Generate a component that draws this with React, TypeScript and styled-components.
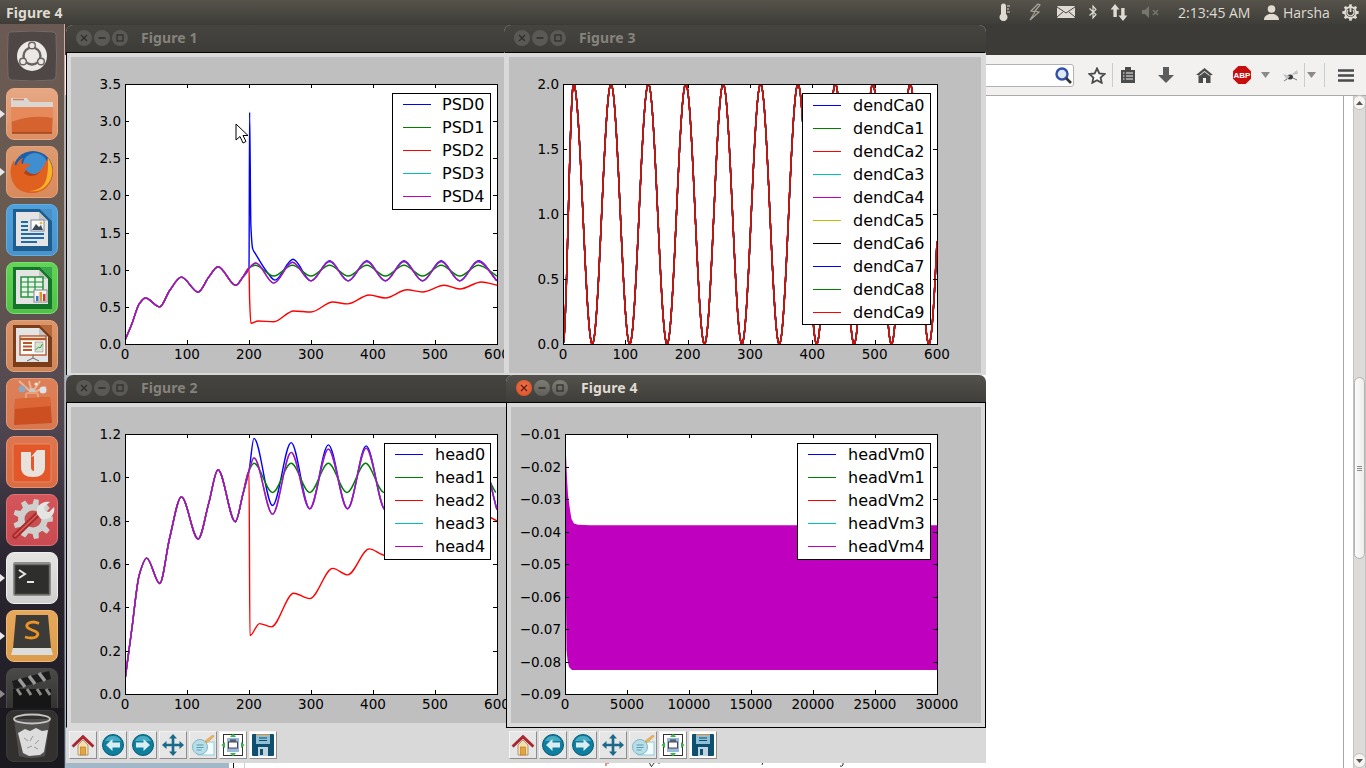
import React from "react";
import styled, { createGlobalStyle } from "styled-components";

const GlobalStyle = createGlobalStyle`
  html, body {
    margin: 0;
    padding: 0;
    background: #fff;
    font-family: "Open Sans", "Liberation Sans", sans-serif;
  }
`;

const Screen = styled.div`
  position: relative;
  width: 1366px;
  height: 768px;
  overflow: hidden;
  display: flex;
  flex-direction: column;
`;

/* ---------- top panel ---------- */
const Panel = styled.div`
  height: 24px;
  flex: none;
  display: flex;
  justify-content: space-between;
  align-items: center;
  background: linear-gradient(#56534b, #3e3d38);
  color: #dfdbd2;
`;

const PanelTitle = styled.div`
  padding-left: 6px;
  font-family: "Noto Sans", sans-serif;
  font-weight: 700;
  font-size: 14px;
  letter-spacing: 0.1px;
`;

const Tray = styled.div`
  display: flex;
  align-items: center;
  height: 24px;
`;

const Slot = styled.div<{ $w: number; $left?: number }>`
  width: ${(p) => p.$w}px;
  height: 24px;
  flex: none;
  box-sizing: border-box;
  display: flex;
  align-items: center;
  justify-content: ${(p) => (p.$left !== undefined ? "flex-start" : "center")};
  padding-left: ${(p) => p.$left ?? 0}px;
  font-size: 14px;
  white-space: nowrap;
`;

/* ---------- launcher ---------- */
const Body = styled.div`
  flex: 1;
  display: flex;
  min-height: 0;
`;

const Launcher = styled.div`
  width: 65px;
  flex: none;
  box-sizing: border-box;
  border-right: 1px solid;
  border-image: linear-gradient(#d8aa9c, #a89a94 50%, #4a4750) 1;
  background: linear-gradient(#6b5a53 0%, #675a50 30%, #4d4450 55%, #2a2530 72%, #1e1b22 100%);
  display: flex;
  flex-direction: column;
`;

const LauncherList = styled.div`
  height: 684px;
  overflow: hidden;
  flex: none;
  padding-top: 6px;
  box-sizing: border-box;
  display: flex;
  flex-direction: column;
  gap: 6px;
`;

const Tile = styled.div<{ $bg: string; $edge: string; $pip?: boolean; $dim?: boolean }>`
  position: relative;
  flex: none;
  width: 52px;
  height: 52px;
  margin-left: 6px;
  box-sizing: border-box;
  border-radius: 8px;
  border: 1px solid ${(p) => p.$edge};
  background: ${(p) => p.$bg};
  &::before {
    content: "";
    display: ${(p) => (p.$pip ? "block" : "none")};
    position: absolute;
    left: -7px;
    top: 21px;
    border-left: 5px solid ${(p) => (p.$dim ? "#8a8a8a" : "#e8e8e8")};
    border-top: 4px solid transparent;
    border-bottom: 4px solid transparent;
  }
  svg {
    display: block;
  }
`;

const TrashSlot = styled.div`
  flex: 1;
  padding-top: 2px;
  background: #1b1920;
`;

/* ---------- browser behind the figures ---------- */
const Browser = styled.div`
  flex: 1;
  display: flex;
  flex-direction: column;
  min-width: 0;
`;

const BrowserTitle = styled.div`
  height: 31px;
  flex: none;
  background: #3c3b37;
`;

const BrowserBar = styled.div`
  height: 41px;
  flex: none;
  box-sizing: border-box;
  background: #f2f1f0;
  border-bottom: 1px solid #a9a9a9;
  display: flex;
  align-items: center;
  justify-content: flex-end;
`;

const SearchBox = styled.div`
  width: 160px;
  height: 23px;
  box-sizing: border-box;
  background: #fff;
  border: 1px solid #b2b2b2;
  border-radius: 3px;
  display: flex;
  align-items: center;
  justify-content: flex-end;
`;

const BarSlot = styled.div<{ $w: number }>`
  width: ${(p) => p.$w}px;
  height: 24px;
  flex: none;
  display: flex;
  align-items: center;
  justify-content: center;
`;

const BarSep = styled.div`
  width: 1px;
  height: 24px;
  flex: none;
  background: #c9cdd0;
`;

const Page = styled.div`
  flex: 1;
  display: flex;
  background: #fff;
  min-height: 0;
  position: relative;
`;

const BlueColumn = styled.div`
  width: 164px;
  background: #a2b8c8;
  flex: none;
`;

const BlackRule = styled.div`
  width: 1px;
  margin-left: 4px;
  background: #111;
  flex: none;
`;

const LightRule = styled.div<{ $gap: number; $c: string }>`
  width: 1px;
  margin-left: ${(p) => p.$gap}px;
  background: ${(p) => p.$c};
  flex: none;
`;

const Scrollbar = styled.div`
  width: 13px;
  margin-left: 9px;
  flex: none;
  display: flex;
  flex-direction: column;
  box-sizing: border-box;
  background: #dcdbda;
  border-left: 1px solid #c4c3c2;
  border-right: 1px solid #c4c3c2;
`;

const ScrollEnd = styled.div`
  height: 13px;
  flex: none;
  background: #f6f5f4;
  border-radius: 6px;
  display: flex;
  align-items: center;
  justify-content: center;
  box-shadow: 0 0 0 1px #c4c3c2;
`;

const ScrollGap = styled.div<{ $h: number }>`
  height: ${(p) => p.$h}px;
  flex: none;
`;

const ScrollThumb = styled.div`
  height: 182px;
  flex: none;
  box-sizing: border-box;
  border: 1px solid #b4b3b2;
  border-radius: 6px;
  background: linear-gradient(90deg, #fbfbfb, #eeedec);
  display: flex;
  flex-direction: column;
  align-items: center;
  justify-content: center;
  gap: 1px;
`;

const Grip = styled.span`
  width: 5px;
  height: 1px;
  background: #8c8b8a;
`;

/* ---------- figure windows ---------- */
const Win = styled.div<{ $x: number; $y: number; $w: number; $h: number; $z: number }>`
  position: absolute;
  left: ${(p) => p.$x}px;
  top: ${(p) => p.$y}px;
  width: ${(p) => p.$w}px;
  height: ${(p) => p.$h}px;
  z-index: ${(p) => p.$z};
  border-radius: 7px 7px 0 0;
  overflow: hidden;
  background: #d9d9d9;
`;

const TitleBar = styled.div<{ $active?: boolean }>`
  height: 27px;
  box-sizing: border-box;
  display: flex;
  align-items: center;
  padding: 0 0 2px 10px;
  background: ${(p) => (p.$active ? "linear-gradient(#53514b, #3f3e3a)" : "linear-gradient(#45443f, #3d3c38)")};
`;

const WinButton = styled.span<{ $close?: boolean; $active?: boolean }>`
  width: 16px;
  height: 16px;
  margin-right: 2px;
  border-radius: 50%;
  flex: none;
  display: flex;
  align-items: center;
  justify-content: center;
  background: ${(p) =>
    p.$close && p.$active
      ? "radial-gradient(circle at 50% 40%, #f0734a, #d64b1f)"
      : p.$active
        ? "linear-gradient(#7d7c75, #5f5e58)"
        : "#5a5955"};
`;

const WinTitle = styled.span<{ $active?: boolean }>`
  margin-left: 11px;
  font-family: "Noto Sans", sans-serif;
  font-weight: 700;
  font-size: 14px;
  letter-spacing: 0.1px;
  color: ${(p) => (p.$active ? "#dfdbd2" : "#85837c")};
`;

const Client = styled.div<{ $active?: boolean; $noLeft?: boolean }>`
  border: 1px solid transparent;
  border-top-color: #000;
  border-left-color: ${(p) => (p.$noLeft ? "transparent" : "#000")};
  ${(p) => p.$active && "border-color: #000;"}
  padding: 4px;
  background: #d9d9d9;
`;

const PlotArea = styled.div`
  height: 316px;
  background: #bfbfbf;
  svg {
    display: block;
  }
`;

const FigToolbar = styled.div`
  height: 35px;
  box-sizing: border-box;
  padding: 3px 3px;
  display: flex;
  gap: 2px;
  background: #d9d9d9;
`;

const ToolButton = styled.div<{ $on?: boolean }>`
  width: 28px;
  height: 28px;
  box-sizing: border-box;
  border: 1px solid;
  border-color: #f4f4f4 #8e8e8e #8e8e8e #f4f4f4;
  background: ${(p) => (p.$on ? "#fff" : "#e6e6e6")};
  display: flex;
  align-items: center;
  justify-content: center;
`;

const Cursor = styled.svg`
  position: absolute;
  left: 235px;
  top: 123px;
  z-index: 9;
`;

const StripMarks = styled.svg`
  position: absolute;
  left: 540px;
  top: 666px;
`;

const TickText = styled.text`
  font-family: "DejaVu Sans", sans-serif;
  font-size: 13.5px;
  fill: #000;
`;

const LegendText = styled.text`
  font-family: "DejaVu Sans", sans-serif;
  font-size: 16px;
  fill: #000;
`;

/* ---------- chart helpers ---------- */
type Pt = [number, number];

// monotone cubic through the points, flat at every turning point
const curvePath = (pts: Pt[], sx: (v: number) => number, sy: (v: number) => number) => {
  const p = pts.map(([a, b]) => [sx(a), sy(b)]);
  const sec = p.slice(1).map((q, i) => (q[1] - p[i][1]) / (q[0] - p[i][0]));
  const m = p.map((_, i) => {
    if (i === 0) return sec[0];
    if (i === p.length - 1) return sec[i - 1];
    const a = sec[i - 1];
    const b = sec[i];
    return a * b <= 0 ? 0 : (2 * a * b) / (a + b);
  });
  let d = `M${p[0][0].toFixed(2)} ${p[0][1].toFixed(2)}`;
  for (let i = 0; i < p.length - 1; i++) {
    const h = (p[i + 1][0] - p[i][0]) / 3;
    d += `C${(p[i][0] + h).toFixed(2)} ${(p[i][1] + m[i] * h).toFixed(2)} ${(p[i + 1][0] - h).toFixed(2)} ${(
      p[i + 1][1] -
      m[i + 1] * h
    ).toFixed(2)} ${p[i + 1][0].toFixed(2)} ${p[i + 1][1].toFixed(2)}`;
  }
  return d;
};

const swing = (start: number, hi: number, lo: number): Pt[] => {
  const out: Pt[] = [];
  for (let t = start, up = false; t <= 600; t += 30, up = !up) out.push([t, up ? hi : lo]);
  return out;
};

interface Series {
  color: string;
  pts?: Pt[];
  fill?: string;
}

interface PlotProps {
  ox: number;
  oy: number;
  w: number;
  box: { x: number; y: number; w: number; h: number };
  xr: [number, number];
  yr: [number, number];
  xt: number[];
  yt: number[];
  yf: (v: number) => string;
  series: Series[];
  id: string;
  legend: { x: number; y: number; w: number; first: number; labels: string[]; colors: string[]; tx?: number };
}

const Plot = ({ ox, oy, w, box, xr, yr, xt, yt, yf, series, id, legend }: PlotProps) => {
  const sx = (v: number) => box.x + ((v - xr[0]) / (xr[1] - xr[0])) * box.w;
  const sy = (v: number) => box.y + box.h - ((v - yr[0]) / (yr[1] - yr[0])) * box.h;
  const bottom = box.y + box.h;
  const right = box.x + box.w;
  return (
    <svg width={w} height={316} viewBox={`${ox} ${oy} ${w} 316`}>
      <defs>
        <clipPath id={id}>
          <rect x={box.x} y={box.y} width={box.w} height={box.h} />
        </clipPath>
      </defs>
      <rect x={box.x} y={box.y} width={box.w} height={box.h} fill="#fff" />
      <g clipPath={`url(#${id})`} fill="none" strokeWidth={1.4}>
        {series.map((s, i) =>
          s.fill ? (
            <path key={i} d={s.fill} fill={s.color} stroke="none" />
          ) : (
            <path key={i} d={curvePath(s.pts as Pt[], sx, sy)} stroke={s.color} />
          ),
        )}
      </g>
      <g stroke="#000" strokeWidth={1}>
        {xt.map((t) => {
          const x = Math.round(sx(t)) + 0.5;
          return (
            <g key={t}>
              <line x1={x} x2={x} y1={box.y} y2={box.y + 4} />
              <line x1={x} x2={x} y1={bottom} y2={bottom - 4} />
            </g>
          );
        })}
        {yt.map((t) => {
          const y = Math.round(sy(t)) + 0.5;
          return (
            <g key={t}>
              <line x1={box.x} x2={box.x + 4} y1={y} y2={y} />
              <line x1={right} x2={right - 4} y1={y} y2={y} />
            </g>
          );
        })}
      </g>
      <rect x={box.x + 0.5} y={box.y + 0.5} width={box.w} height={box.h} fill="none" stroke="#000" />
      {xt.map((t) => (
        <TickText key={t} x={sx(t)} y={bottom + 15} textAnchor="middle">
          {t}
        </TickText>
      ))}
      {yt.map((t) => (
        <TickText key={t} x={box.x - 4} y={sy(t) + 5} textAnchor="end">
          {yf(t)}
        </TickText>
      ))}
      <rect
        x={legend.x + 0.5}
        y={legend.y + 0.5}
        width={legend.w}
        height={legend.labels.length * 23 + 1}
        fill="#fff"
        stroke="#000"
      />
      {legend.labels.map((label, i) => {
        const y = legend.first + i * 23;
        return (
          <g key={label}>
            <line
              x1={legend.x + 11}
              x2={legend.x + 39}
              y1={y + 0.5}
              y2={y + 0.5}
              stroke={legend.colors[i % legend.colors.length]}
            />
            <LegendText x={legend.x + (legend.tx ?? 51)} y={y + 6}>
              {label}
            </LegendText>
          </g>
        );
      })}
    </svg>
  );
};

/* ---------- figure data ---------- */
const MPL = ["#0000ff", "#008000", "#ff0000", "#00bfbf", "#bf00bf", "#bfbf00", "#000000"];
const range = (a: number, b: number, s: number) => {
  const out: number[] = [];
  for (let i = 0; a + i * s <= b + 1e-9; i++) out.push(+(a + i * s).toFixed(3));
  return out;
};

const psdBase: Pt[] = [
  [0, 0.05], [11, 0.27], [23, 0.54], [33, 0.62], [56, 0.5], [72, 0.72], [91, 0.9], [118, 0.7],
  [135, 0.9], [150, 1.04], [179, 0.79], [190, 0.9], [200, 1.02],
];
const psdSeries: Series[] = [
  {
    color: MPL[0],
    pts: [...psdBase, [201, 3.12], [203, 1.6], [206, 1.28], [210, 1.22], [229, 0.97], [242, 0.86], [271, 1.14], [300, 0.85], [330, 1.12], ...swing(360, 1.12, 0.85)],
  },
  { color: MPL[1], pts: [...psdBase, [210, 1.06], ...swing(240, 1.06, 0.915)] },
  {
    color: MPL[2],
    pts: [...psdBase, [201, 0.6], [203, 0.28], [215, 0.31], [240, 0.3], [272, 0.445], [300, 0.43], [335, 0.565], [359, 0.54], [394, 0.66], [420, 0.62], [455, 0.73], [480, 0.7], [515, 0.79], [540, 0.74], [575, 0.835], [600, 0.79]],
  },
  { color: MPL[3], pts: [...psdBase, [211, 1.09], [240, 0.82], [270, 1.1], [300, 0.85], [330, 1.11], ...swing(360, 1.11, 0.85)] },
  { color: MPL[4], pts: [...psdBase, [211, 1.09], [240, 0.82], [270, 1.1], [300, 0.85], [330, 1.11], ...swing(360, 1.11, 0.85)] },
];

const headBase: Pt[] = [
  [0, 0.065], [11, 0.3], [23, 0.55], [35, 0.627], [56, 0.51], [72, 0.72], [91, 0.91], [118, 0.715],
  [135, 0.88], [150, 1.035], [178, 0.795], [190, 0.92], [200, 1.03],
];
const headSeries: Series[] = [
  {
    color: MPL[0],
    pts: [...headBase, [208, 1.18], [238, 0.87], [268, 1.16], [298, 0.855], [328, 1.15], [359, 0.855], [389, 1.145], ...swing(420, 1.14, 0.85)],
  },
  { color: MPL[1], pts: [...headBase, [208, 1.065], [238, 0.93], [268, 1.065], ...swing(298, 1.065, 0.93)] },
  {
    color: MPL[2],
    pts: [...headBase, [201.5, 0.27], [217, 0.325], [236, 0.31], [272, 0.465], [298, 0.44], [335, 0.58], [359, 0.55], [394, 0.67], [420, 0.64], [455, 0.73], [480, 0.7], [515, 0.79], [540, 0.74], [575, 0.83], [600, 0.8]],
  },
  { color: MPL[3], pts: [...headBase, [208, 1.09], [238, 0.83], [268, 1.115], [298, 0.855], [328, 1.13], [359, 0.855], [389, 1.135], ...swing(420, 1.135, 0.85)] },
  { color: MPL[4], pts: [...headBase, [208, 1.09], [238, 0.83], [268, 1.115], [298, 0.855], [328, 1.13], [359, 0.855], [389, 1.135], ...swing(420, 1.135, 0.85)] },
];

const dendPts: Pt[] = range(0, 600, 1).map((t) => {
  if (t < 17) return [t, 1 - Math.cos((Math.PI * t) / 17)];
  return [t, 1 - Math.cos((2 * Math.PI * (t - 47)) / 60)];
});
const dendColors = [MPL[0], MPL[1], MPL[2], MPL[3], MPL[4], MPL[5], MPL[6], MPL[0], MPL[1], MPL[2]];
const dendSeries: Series[] = dendColors.map((color) => ({ color, pts: dendPts }));

const vmSeries: Series[] = [
  {
    color: "#bf00bf",
    fill: "M566 455L567 478L568 495L570 510L571.500 519L574 523.500L578 524.800L590 525.300L938 525.300L938 670L572 670L569 667L567.500 660L566.500 650L566 600Z",
  },
];

const Frame = ({
  title,
  active,
  noLeft,
  children,
}: {
  title: string;
  active?: boolean;
  noLeft?: boolean;
  children: React.ReactNode;
}) => (
  <>
    <TitleBar $active={active}>
      <WinButton $close $active={active}>
        <svg width="8" height="8" viewBox="0 0 8 8">
          <path d="M1 1l6 6M7 1l-6 6" stroke={active ? "#5a1a08" : "#2e2d2a"} strokeWidth="1.2" />
        </svg>
      </WinButton>
      <WinButton $active={active}>
        <svg width="8" height="8" viewBox="0 0 8 8">
          <path d="M0.500 4h7" stroke="#2e2d2a" strokeWidth="1.4" />
        </svg>
      </WinButton>
      <WinButton $active={active}>
        <svg width="8" height="8" viewBox="0 0 8 8">
          <rect x="1" y="1" width="6" height="6" fill="none" stroke="#2e2d2a" strokeWidth="1.2" />
        </svg>
      </WinButton>
      <WinTitle $active={active}>{title}</WinTitle>
    </TitleBar>
    <Client $active={active} $noLeft={noLeft}>
      <PlotArea>{children}</PlotArea>
    </Client>
  </>
);

/* ---------- matplotlib toolbar icons ---------- */
const FigTools = () => (
  <FigToolbar>
    <ToolButton>
      <svg width="24" height="24" viewBox="0 0 24 24">
        <path d="M7 12v10h10V12L12 7z" fill="#f6dfae" stroke="#9a7a4a" strokeWidth=".7" />
        <rect x="9.500" y="14" width="5" height="8" fill="#e8a33a" stroke="#a06a20" strokeWidth=".5" />
        <path d="M1 12.500L12 2l11 10.500-1.500 1.800L12 5.500 2.500 14.300z" fill="#b5202c" stroke="#7c1018" strokeWidth=".5" />
      </svg>
    </ToolButton>
    <ToolButton>
      <svg width="24" height="24" viewBox="0 0 24 24">
        <circle cx="12" cy="12" r="10.500" fill="#0f7f9f" stroke="#0a5a74" strokeWidth="1" />
        <path d="M4 8a9 9 0 0 1 16 0" fill="#5cbcd2" opacity=".7" />
        <path d="M5 12l6.500-6v3.500H19v5h-7.500V18z" fill="#d7eef3" />
      </svg>
    </ToolButton>
    <ToolButton>
      <svg width="24" height="24" viewBox="0 0 24 24">
        <circle cx="12" cy="12" r="10.500" fill="#0f7f9f" stroke="#0a5a74" strokeWidth="1" />
        <path d="M4 8a9 9 0 0 1 16 0" fill="#5cbcd2" opacity=".7" />
        <path d="M19 12l-6.500-6v3.500H5v5h7.500V18z" fill="#d7eef3" />
      </svg>
    </ToolButton>
    <ToolButton>
      <svg width="24" height="24" viewBox="0 0 24 24">
        <path
          d="M12 1l4 4.500h-2.700v5.200h5.200V8l4.500 4-4.500 4v-2.700h-5.200v5.200H16L12 23l-4-4.500h2.700v-5.200H5.500V16L1 12l4.500-4v2.700h5.200V5.500H8z"
          fill="#1b6a8a"
        />
      </svg>
    </ToolButton>
    <ToolButton>
      <svg width="24" height="24" viewBox="0 0 24 24">
        <rect x="7" y="9" width="16" height="13" fill="#f4fbfd" stroke="#8ccbdc" />
        <circle cx="9" cy="14" r="7.500" fill="#b8dfe8" stroke="#7fb8c8" />
        <path d="M5.500 12h7M5.500 14.500h7M5.500 17h5" stroke="#5b9db0" />
        <path d="M14 8l8-6 1 1.500-7.500 6.500z" fill="#efb45c" stroke="#c98a30" strokeWidth=".5" />
      </svg>
    </ToolButton>
    <ToolButton $on>
      <svg width="24" height="24" viewBox="0 0 24 24">
        <rect x="2.500" y="1.500" width="19" height="21" fill="#fff" stroke="#333" />
        <rect x="6" y="5" width="12" height="14" fill="#9bb7dc" />
        <rect x="7.500" y="9" width="9" height="6" fill="#fff" stroke="#222" strokeWidth=".8" />
        <path d="M9 7h6M9 8h6" stroke="#222" strokeWidth=".7" />
        <path d="M12 0.500l3 3.500H9zM12 23.500l-3-3.500h6zM0.500 12l3.500-3v6zM23.500 12L20 15V9z" fill="#38b549" />
      </svg>
    </ToolButton>
    <ToolButton $on>
      <svg width="24" height="24" viewBox="0 0 24 24">
        <rect x="1" y="1" width="22" height="22" rx="1" fill="#0f4f70" />
        <rect x="5" y="1" width="14" height="10" fill="#8ebfd4" />
        <path d="M5 1.500h14" stroke="#d68a3a" />
        <path d="M8 5h8M8 7.500h8" stroke="#0f4f70" />
        <rect x="7" y="14" width="10" height="9" fill="#bfd4de" />
        <rect x="9" y="16" width="3" height="6" fill="#0f4f70" />
      </svg>
    </ToolButton>
  </FigToolbar>
);

/* ---------- launcher icons ---------- */
const gear = (cx: number, cy: number, r1: number, r2: number, n: number) => {
  let d = "";
  for (let i = 0; i < n; i++) {
    const a = (i / n) * Math.PI * 2;
    const w = Math.PI / n / 2;
    const pts = [
      [r1, a - w * 1.2],
      [r2, a - w * 0.7],
      [r2, a + w * 0.7],
      [r1, a + w * 1.2],
    ];
    pts.forEach(([r, t], j) => {
      d += `${i === 0 && j === 0 ? "M" : "L"}${(cx + r * Math.cos(t)).toFixed(2)} ${(cy + r * Math.sin(t)).toFixed(2)}`;
    });
  }
  return d + "Z";
};

const DocPage = ({ dark, fold, children }: { dark: string; fold: string; children: React.ReactNode }) => (
  <svg width="50" height="50" viewBox="0 0 50 50">
    <path d="M6 4h27l12 12v30H6z" fill={dark} />
    <path d="M33 4l12 12V4z" fill={fold} />
    <path d="M9 7h23l9 9v25H9z" fill="#e4e4e4" />
    <path d="M32 7l9 9h-9z" fill="#c4c4c4" />
    {children}
  </svg>
);

const UbuntuIcon = () => (
  <svg width="50" height="50" viewBox="0 0 50 50">
    <path d="M3 1q22-2 44 0 3 2 2 4 1 20 0 40 0 3-3 4-21 2-42 0-3-1-3-4-1-20 0-40 0-3 2-4z" fill="#4e4745" stroke="#756c6a" />
    <circle cx="25" cy="25" r="15" fill="#ece8e6" />
    <circle cx="25" cy="25" r="8.500" fill="none" stroke="#6a625f" strokeWidth="2.400" />
    <circle cx="25" cy="14.500" r="4" fill="#6a625f" />
    <circle cx="16" cy="30.500" r="4" fill="#6a625f" />
    <circle cx="34" cy="30.500" r="4" fill="#6a625f" />
    <circle cx="25" cy="14.500" r="2.600" fill="#ece8e6" />
    <circle cx="16" cy="30.500" r="2.600" fill="#ece8e6" />
    <circle cx="34" cy="30.500" r="2.600" fill="#ece8e6" />
  </svg>
);

const FolderIcon = () => (
  <svg width="50" height="50" viewBox="0 0 50 50">
    <path d="M4 9h16l3 4h23v6H4z" fill="#dcd6d2" />
    <path d="M6 10.500h11" stroke="#d27c50" strokeWidth="1.500" />
    <path d="M4 18h42l-1 26H5z" fill="#d5632f" />
    <path d="M4 18h42v11Q25 25 4 33z" fill="#e68a5c" />
    <path d="M5 44h40" stroke="#9e431b" strokeWidth="1.500" />
  </svg>
);

const FirefoxIcon = () => (
  <svg width="50" height="50" viewBox="0 0 50 50">
    <circle cx="26" cy="24" r="20" fill="#1f5fa8" />
    <circle cx="28" cy="18" r="12" fill="#3f8ed0" />
    <path d="M41 11c7 9 7 20-1 29-8 8-22 8-30 1C2 33 2 20 7 13c0 3 1 5 2 6 1-4 4-7 7-8-2 3-2 5-1 6 4-1 8 0 9 2-3 0-6 2-6 5 2 3 6 4 10 3 5-1 8-7 13-16z" fill="#e0601f" />
    <path d="M41 11c6 9 6 20-2 28-5 5-12 6-17 5 8 0 15-4 17-11 2-6 2-13 2-22z" fill="#f5b52a" />
    <path d="M19 23c4 5 11 5 15 1-3 5-12 7-17 2z" fill="#b53f12" />
  </svg>
);

const WriterIcon = () => (
  <DocPage dark="#1f5d8f" fold="#4a90c8">
    <path d="M14 17h7M14 21h7M14 25h7M14 29h23M14 33h23M14 37h16" stroke="#1f6aa8" strokeWidth="1.800" />
    <rect x="24" y="15" width="13" height="11" fill="#fff" stroke="#7a8a98" />
    <path d="M25 25l4-6 3 3 2-2 2 5z" fill="#3c4a5a" />
    <circle cx="34" cy="18" r="1.500" fill="#e8b84a" />
  </DocPage>
);

const CalcIcon = () => (
  <DocPage dark="#14752a" fold="#3aa84a">
    <rect x="14" y="14" width="22" height="20" fill="#e8f4e8" stroke="#1d8a36" strokeWidth="1.400" />
    <path d="M14 19h22M14 24h22M14 29h22M21 14v20M28 14v20" stroke="#1d8a36" strokeWidth="1.200" />
    <rect x="27" y="27" width="13" height="12" fill="#f4f4f4" stroke="#888" />
    <rect x="29" y="33" width="2.500" height="5" fill="#2f7ad0" />
    <rect x="32.500" y="29" width="2.500" height="9" fill="#e8902a" />
    <rect x="36" y="31" width="2.500" height="7" fill="#c8402a" />
  </DocPage>
);

const ImpressIcon = () => (
  <DocPage dark="#7a3d1c" fold="#b5683a">
    <rect x="13" y="15" width="26" height="19" fill="#fff" stroke="#b5582a" strokeWidth="1.400" />
    <path d="M13 18h26" stroke="#b5582a" strokeWidth="2.500" />
    <path d="M16 22h9M16 25.500h9M16 29h9" stroke="#b5582a" strokeWidth="2" />
    <rect x="28" y="21" width="8" height="10" fill="#d8e4d0" stroke="#888" strokeWidth=".6" />
    <path d="M28.500 29l3-3 1.500 1 2.500-4" stroke="#3a9a3a" fill="none" />
    <path d="M26 34v3l-6 3M26 37l6 3" stroke="#666" fill="none" />
  </DocPage>
);

const SoftwareIcon = () => (
  <svg width="50" height="50" viewBox="0 0 50 50">
    <path d="M25 14L12 2M25 14l-3-12M25 14l8-12M25 14l14-6" stroke="#f3d8c6" strokeWidth="2" opacity=".6" />
    <circle cx="15" cy="10" r="3.500" fill="#8fa6c0" />
    <circle cx="25" cy="12" r="3" fill="#c8c8c8" />
    <circle cx="36" cy="11" r="3.500" fill="#dde2e8" />
    <circle cx="29" cy="5" r="1.500" fill="#f4f0ea" />
    <path d="M19 21v-5q0-2 2-2h8q2 0 2 2v5" fill="none" stroke="#e8a078" strokeWidth="2.200" />
    <path d="M8 20l35-2 2 26-38 2z" fill="#cc4f22" />
    <path d="M8 20l35-2 .7 9-36 3z" fill="#dc6636" />
  </svg>
);

const UbuntuOneIcon = () => (
  <svg width="50" height="50" viewBox="0 0 50 50">
    <rect x="6" y="7" width="38" height="38" rx="2" fill="#e2582a" stroke="#ec8a5f" />
    <path d="M14 15h10v15q0 4 3 4V19l-3 1 6-7h8v17q0 10-12 10T14 30z" fill="#e9e2dc" />
  </svg>
);

const SettingsIcon = () => (
  <svg width="50" height="50" viewBox="0 0 50 50">
    <path d={gear(26, 24, 15, 20, 9)} fill="#cfcfcd" />
    <circle cx="26" cy="24" r="8.500" fill="#c75050" />
    <path d="M8 41L34 16" stroke="#a82c2c" strokeWidth="5.500" strokeLinecap="round" />
    <path d="M8 41L34 16" stroke="#d8605c" strokeWidth="1.500" strokeLinecap="round" />
    <path d="M30 19c-2-7 5-14 13-12l-6 5 1 4 4 1 5-5c2 7-5 14-13 12z" fill="#e4e4e2" />
  </svg>
);

const TerminalIcon = () => (
  <svg width="50" height="50" viewBox="0 0 50 50">
    <rect x="6" y="9" width="38" height="34" rx="2" fill="#8e8e8c" />
    <rect x="8" y="12" width="34" height="29" fill="#2e2e2d" stroke="#4a4a48" />
    <path d="M12 17l6 4-6 4" fill="none" stroke="#e6e6e6" strokeWidth="2" />
    <path d="M20 29h7" stroke="#e6e6e6" strokeWidth="2" />
  </svg>
);

const SublimeIcon = () => (
  <svg width="50" height="50" viewBox="0 0 50 50">
    <path d="M9 4h32l3 34H6z" fill="#3c3b38" />
    <path d="M6 37h38l2 7H4z" fill="#dcdcd8" />
    <path d="M32 12.500q-6-3-11 0c-3 3 0 5 4 6.500 5 1.500 8 3.500 4 7q-4 2-11 0" fill="none" stroke="#ec9426" strokeWidth="2.800" />
  </svg>
);

const FilmIcon = () => (
  <svg width="50" height="50" viewBox="0 0 50 50">
    <path d="M5 12L42 2l2 8-37 10z" fill="#1c1c1c" />
    <path d="M12 10l6 8M22 7l6 8M32 4l6 8" stroke="#9a9a98" strokeWidth="3.500" />
    <rect x="6" y="20" width="38" height="30" fill="#161616" />
    <path d="M10 20l4 6M20 20l4 6M30 20l4 6M39 20l4 6" stroke="#8a8a88" strokeWidth="3" />
  </svg>
);

const TrashIcon = () => (
  <svg width="50" height="50" viewBox="0 0 50 50">
    <path d="M7 8l5 37q13 4 26 0l5-37z" fill="#6a6a6a" opacity=".55" />
    <ellipse cx="25" cy="8" rx="18" ry="4.500" fill="none" stroke="#c4c4c4" strokeWidth="1.800" />
    <path d="M11 22l7-4 5 2 6-3 6 3 6-1-4 22-4 3-11 1-6-3z" fill="#dcdcdc" />
    <path d="M17 27l4 3M26 25l-3 5M32 29l-4 4M20 37l5-2M31 38l-4-2" stroke="#9a9a9a" />
  </svg>
);

/* ---------- tray glyphs ---------- */
const ink = "#dfdbd2";
const Thermometer = () => (
  <svg width="14" height="18" viewBox="0 0 14 18">
    <path d="M3 3a2.500 2.500 0 0 1 5 0v8a4 4 0 1 1-5 0z" fill={ink} />
    <path d="M9 3h3M9 6h2M9 9h3" stroke={ink} />
  </svg>
);
const Bolt = () => (
  <svg width="14" height="18" viewBox="0 0 14 18">
    <path d="M10 1L3 8l4 1-5 8 9-8-4-1 5-6z" fill="none" stroke="#a8a497" strokeWidth="1.200" />
  </svg>
);
const MailIcon = () => (
  <svg width="18" height="12" viewBox="0 0 18 12">
    <rect width="18" height="12" rx="1" fill={ink} />
    <path d="M0 1l9 6 9-6M0 11l6-5M18 11l-6-5" stroke="#4a4843" fill="none" />
  </svg>
);
const Bluetooth = () => (
  <svg width="10" height="16" viewBox="0 0 10 16">
    <path d="M1.500 4.500L8 10.500 5 14V2l3 3.500L1.500 11.500" fill="none" stroke={ink} strokeWidth="1.200" />
  </svg>
);
const Transfer = () => (
  <svg width="18" height="17" viewBox="0 0 18 17">
    <path d="M5 0l4.500 5.500H6.800V13H3.400V5.500H.6z" fill={ink} />
    <path d="M13 17l-4.500-5.500h2.700V4h3.400v7.500h2.800z" fill={ink} />
  </svg>
);
const Muted = () => (
  <svg width="18" height="12" viewBox="0 0 18 12">
    <path d="M0 4h3l4-4v12L3 8H0z" fill="#77756e" />
    <path d="M11 4l5 5M16 4l-5 5" stroke="#77756e" strokeWidth="1.500" />
  </svg>
);
const UserGlyph = () => (
  <svg width="15" height="15" viewBox="0 0 15 15">
    <circle cx="7.500" cy="4" r="3.800" fill={ink} />
    <path d="M0 15c0-4 3-5 5-6h5c2 1 5 2 5 6z" fill={ink} />
  </svg>
);
const PowerGear = () => (
  <svg width="17" height="17" viewBox="0 0 17 17">
    <path d={gear(8.5, 8.5, 6.4, 8.3, 8)} fill={ink} />
    <circle cx="8.500" cy="8.500" r="4.600" fill="#45433e" />
    <path d="M8.500 3v5" stroke={ink} strokeWidth="1.800" />
    <path d="M6 6a3.400 3.400 0 1 0 5 0" fill="none" stroke={ink} strokeWidth="1.300" />
  </svg>
);

/* ---------- browser toolbar glyphs ---------- */
const barInk = "#4b4b4b";
const DropArrow = () => (
  <svg width="9" height="6" viewBox="0 0 9 6">
    <path d="M0 0h9L4.500 6z" fill="#8a8a8a" />
  </svg>
);

export default function App() {
  const xt600 = range(0, 600, 100);
  const leg5 = (x: number, w: number, name: string) => ({
    x,
    y: 443,
    w,
    first: 454,
    labels: range(0, 4, 1).map((i) => `${name}${i}`),
    colors: MPL,
  });
  return (
    <Screen>
      <GlobalStyle />
      <Panel>
        <PanelTitle>Figure 4</PanelTitle>
        <Tray>
          <Slot $w={30}><Thermometer /></Slot>
          <Slot $w={30}><Bolt /></Slot>
          <Slot $w={32}><MailIcon /></Slot>
          <Slot $w={22}><Bluetooth /></Slot>
          <Slot $w={30}><Transfer /></Slot>
          <Slot $w={34}><Muted /></Slot>
          <Slot $w={92} $left={10}>2:13:45 AM</Slot>
          <Slot $w={22}><UserGlyph /></Slot>
          <Slot $w={53} $left={1}>Harsha</Slot>
          <Slot $w={31}><PowerGear /></Slot>
        </Tray>
      </Panel>

      <Body>
        <Launcher>
          <LauncherList>
            <Tile $bg="transparent" $edge="transparent"><UbuntuIcon /></Tile>
            <Tile $bg="linear-gradient(#e6a884, #dd8f64)" $edge="#eba883" $pip><FolderIcon /></Tile>
            <Tile $bg="linear-gradient(#dd9a70, #d98a5c)" $edge="#e2a47c" $pip><FirefoxIcon /></Tile>
            <Tile $bg="linear-gradient(#4ea1dc, #4a93cc)" $edge="#63aee0"><WriterIcon /></Tile>
            <Tile $bg="linear-gradient(#62d456, #53c04a)" $edge="#7add70"><CalcIcon /></Tile>
            <Tile $bg="linear-gradient(#dc9468, #d08658)" $edge="#e2a47c"><ImpressIcon /></Tile>
            <Tile $bg="linear-gradient(#dd8058, #d87850)" $edge="#e59a7a"><SoftwareIcon /></Tile>
            <Tile $bg="linear-gradient(#dd7650, #d96c44)" $edge="#e59272"><UbuntuOneIcon /></Tile>
            <Tile $bg="linear-gradient(#d4565a, #c94a50)" $edge="#dc7478"><SettingsIcon /></Tile>
            <Tile $bg="linear-gradient(#e4e4e2, #cfcfcd)" $edge="#efefed" $pip><TerminalIcon /></Tile>
            <Tile $bg="linear-gradient(#e6a85a, #dc9c4c)" $edge="#ecba7a" $pip><SublimeIcon /></Tile>
            <Tile $bg="linear-gradient(#4a4a48, #2c2c2c)" $edge="#4a4a48" $pip $dim><FilmIcon /></Tile>
          </LauncherList>
          <TrashSlot>
            <Tile $bg="#33312f" $edge="#3e3c3a"><TrashIcon /></Tile>
          </TrashSlot>
        </Launcher>

        <Browser>
          <BrowserTitle />
          <BrowserBar>
            <SearchBox>
              <svg width="19" height="19" viewBox="0 0 19 19">
                <circle cx="8" cy="8" r="5.500" fill="#dfe8f6" stroke="#2f4fa8" strokeWidth="2.400" />
                <path d="M12 12l5 5" stroke="#333" strokeWidth="2.600" />
              </svg>
            </SearchBox>
            <BarSlot $w={8} />
            <BarSlot $w={30}>
              <svg width="18" height="17" viewBox="0 0 18 17">
                <path d="M9 1.500l2.300 5 5.200.6-3.900 3.500 1.100 5.200L9 13.200l-4.700 2.600 1.100-5.200L1.500 7.100l5.200-.6z" fill="#f8f8f8" stroke={barInk} strokeWidth="1.800" />
              </svg>
            </BarSlot>
            <BarSep />
            <BarSlot $w={30}>
              <svg width="16" height="18" viewBox="0 0 16 18">
                <path d="M1 4h4V1h6v3h4v13H1z" fill={barInk} />
                <path d="M3 7h1.500M6 7h7M3 10h1.500M6 10h7M3 13h1.500M6 13h7" stroke="#f2f1f0" />
              </svg>
            </BarSlot>
            <BarSlot $w={8} />
            <BarSlot $w={30}>
              <svg width="16" height="16" viewBox="0 0 16 16">
                <path d="M5 0h6v8h5l-8 8-8-8h5z" fill="#5c5c5c" />
              </svg>
            </BarSlot>
            <BarSlot $w={8} />
            <BarSlot $w={30}>
              <svg width="17" height="15" viewBox="0 0 17 15">
                <path d="M8.500 0L17 7h-2.500v8H10v-5H7v5H2.500V7H0z" fill={barInk} />
                <path d="M8.500 3l5 4v1l-5-4-5 4V7z" fill="#f2f1f0" />
              </svg>
            </BarSlot>
            <BarSlot $w={8} />
            <BarSlot $w={30}>
              <svg width="18" height="18" viewBox="0 0 18 18">
                <path d="M5.300 0h7.400L18 5.300v7.400L12.700 18H5.300L0 12.700V5.300z" fill="#c70d0d" />
                <text x="9" y="12" textAnchor="middle" fontSize="8" fontWeight="700" fontFamily="Liberation Sans, sans-serif" fill="#fff">ABP</text>
              </svg>
            </BarSlot>
            <BarSlot $w={16}><DropArrow /></BarSlot>
            <BarSlot $w={4} />
            <BarSlot $w={27}>
              <svg width="17" height="13" viewBox="0 0 17 13">
                <ellipse cx="8" cy="8" rx="3" ry="2.500" fill="#3a3a3a" />
                <path d="M8 7L1 5l4 6zM9 6l6-5 1 4z" fill="#c4c4c4" />
                <path d="M5 10l-3 2M11 9l4 2" stroke="#777" />
              </svg>
            </BarSlot>
            <BarSep />
            <BarSlot $w={12}><DropArrow /></BarSlot>
            <BarSlot $w={7} />
            <BarSep />
            <BarSlot $w={41}>
              <svg width="16" height="13" viewBox="0 0 16 13">
                <path d="M0 1.500h16M0 6.500h16M0 11.500h16" stroke="#4a4a4a" strokeWidth="2.600" />
              </svg>
            </BarSlot>
          </BrowserBar>
          <Page>
            <BlueColumn />
            <BlackRule />
            <LightRule $gap={10} $c="#cfcfcf" />
            <LightRule $gap={1098} $c="#a8a8a8" />
            <Scrollbar>
              <ScrollEnd>
                <svg width="7" height="4" viewBox="0 0 7 4">
                  <path d="M0 4h7L3.500 0z" fill="#555" />
                </svg>
              </ScrollEnd>
              <ScrollGap $h={268} />
              <ScrollThumb>
                <Grip />
                <Grip />
                <Grip />
              </ScrollThumb>
              <ScrollGap $h={195} />
              <ScrollEnd>
                <svg width="7" height="4" viewBox="0 0 7 4">
                  <path d="M0 0h7L3.500 4z" fill="#555" />
                </svg>
              </ScrollEnd>
            </Scrollbar>
            <StripMarks width="240" height="6" viewBox="0 0 240 6">
              <path d="M1 0v4M3 0v2" stroke="#b03020" />
              <path d="M44 0l2 4M50 0l-4 5M54 0v2" stroke="#333" />
              <path d="M158 0l-1 3" stroke="#333" />
              <path d="M238 0v3q-1 2-3 1" stroke="#333" fill="none" />
            </StripMarks>
          </Page>
        </Browser>
      </Body>

      <Win $x={66} $y={25} $w={480} $h={350} $z={1}>
        <Frame title="Figure 1">
          <Plot
            id="fig1"
            ox={71}
            oy={57}
            w={470}
            box={{ x: 125, y: 84, w: 372, h: 260 }}
            xr={[0, 600]}
            yr={[0, 3.5]}
            xt={xt600}
            yt={range(0, 3.5, 0.5)}
            yf={(v) => v.toFixed(1)}
            series={psdSeries}
            legend={{ ...leg5(392, 98, "PSD"), y: 93, first: 104, tx: 50 }}
          />
        </Frame>
      </Win>

      <Win $x={504} $y={25} $w={482} $h={350} $z={2}>
        <Frame title="Figure 3" noLeft>
          <Plot
            id="fig3"
            ox={509}
            oy={57}
            w={472}
            box={{ x: 563, y: 84, w: 374, h: 260 }}
            xr={[0, 600]}
            yr={[0, 2]}
            xt={xt600}
            yt={range(0, 2, 0.5)}
            yf={(v) => v.toFixed(1)}
            series={dendSeries}
            legend={{
              x: 802,
              y: 93,
              w: 128,
              first: 105,
              labels: range(0, 9, 1).map((i) => `dendCa${i}`),
              colors: dendColors,
            }}
          />
        </Frame>
      </Win>

      <Win $x={66} $y={375} $w={480} $h={388} $z={3}>
        <Frame title="Figure 2">
          <Plot
            id="fig2"
            ox={71}
            oy={407}
            w={470}
            box={{ x: 125, y: 434, w: 372, h: 260 }}
            xr={[0, 600]}
            yr={[0, 1.2]}
            xt={xt600}
            yt={range(0, 1.2, 0.2)}
            yf={(v) => v.toFixed(1)}
            series={headSeries}
            legend={leg5(384, 106, "head")}
          />
        </Frame>
        <FigTools />
      </Win>

      <Win $x={506} $y={375} $w={480} $h={388} $z={4}>
        <Frame title="Figure 4" active>
          <Plot
            id="fig4"
            ox={511}
            oy={407}
            w={470}
            box={{ x: 565, y: 434, w: 372, h: 260 }}
            xr={[0, 30000]}
            yr={[-0.09, -0.01]}
            xt={range(0, 30000, 5000)}
            yt={range(-0.09, -0.01, 0.01)}
            yf={(v) => `\u2212${Math.abs(v).toFixed(2)}`}
            series={vmSeries}
            legend={leg5(797, 133, "headVm")}
          />
        </Frame>
        <FigTools />
      </Win>

      <Cursor width="14" height="21" viewBox="0 0 14 21">
        <path d="M1 1v16l4-3.500 3 6.500 3-1.500-3-6h5z" fill="#fff" stroke="#000" strokeWidth="1" />
      </Cursor>
    </Screen>
  );
}
